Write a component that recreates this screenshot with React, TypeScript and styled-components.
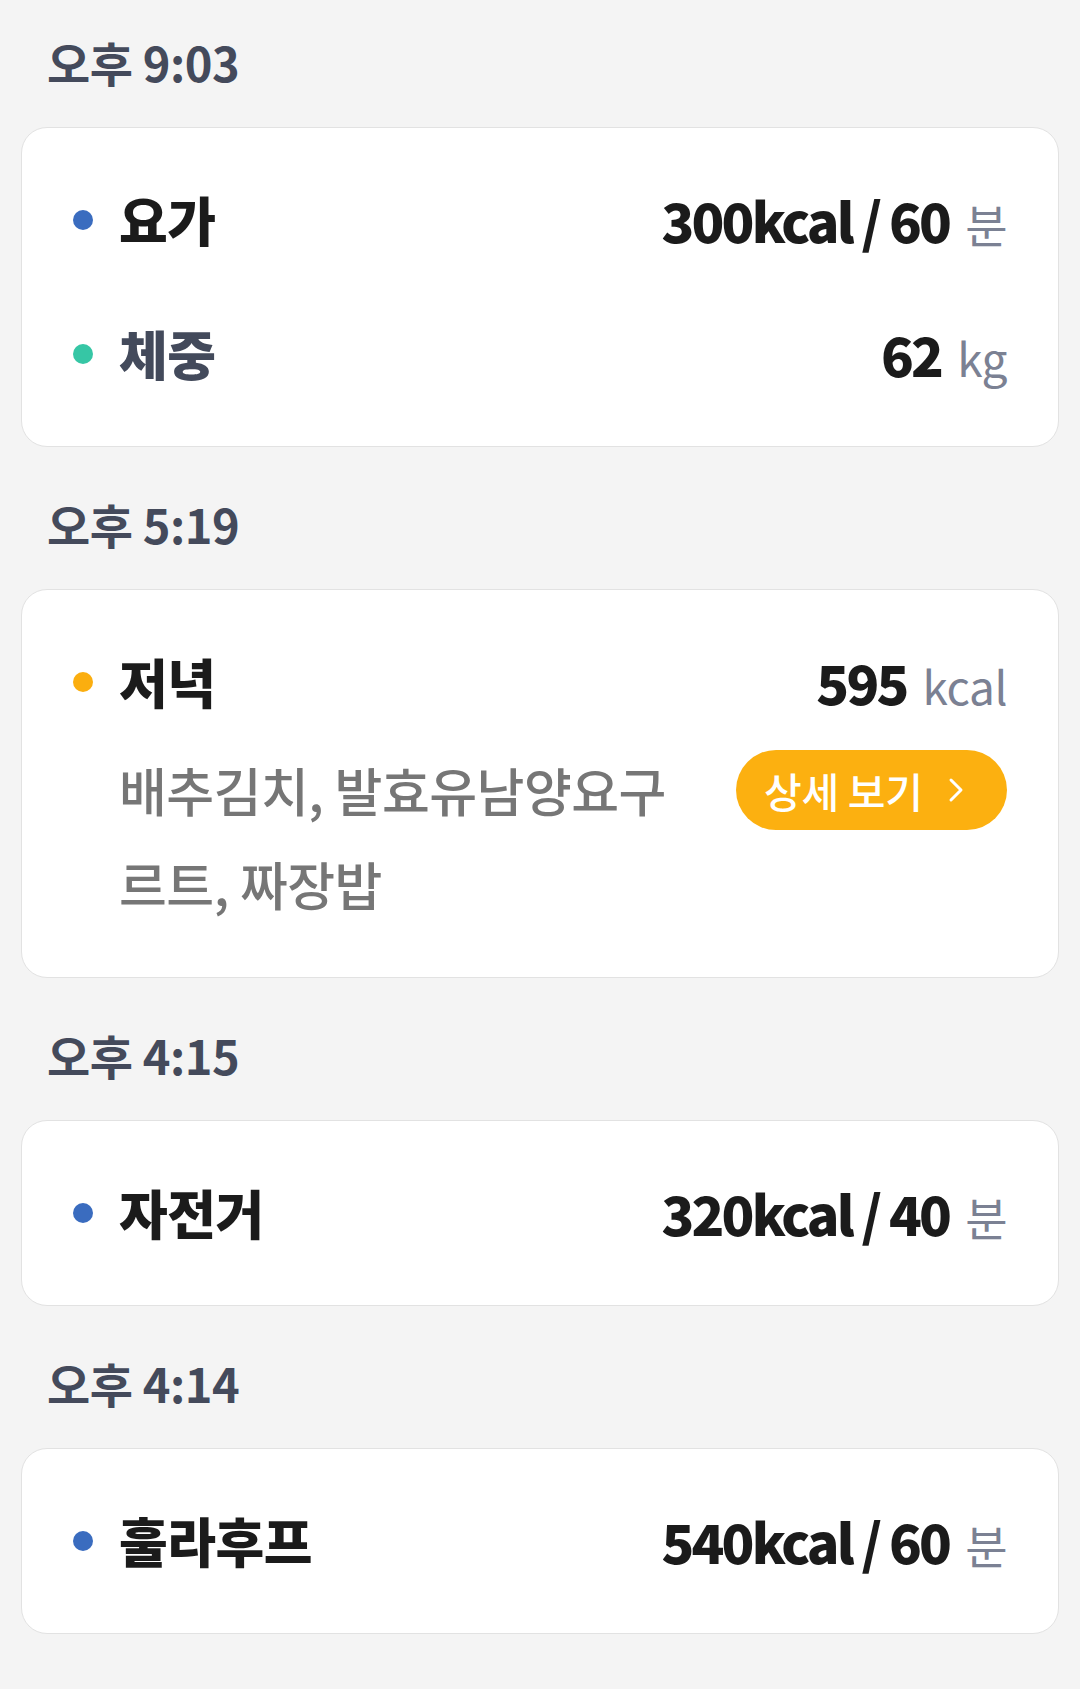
import React from "react";
import styled, { createGlobalStyle } from "styled-components";

const GlobalStyle = createGlobalStyle`
  html, body {
    margin: 0;
    padding: 0;
    background: #f4f4f4;
  }
  body {
    font-family: "Noto Sans CJK KR", "Noto Sans", sans-serif;
    -webkit-font-smoothing: antialiased;
  }
`;

const Page = styled.main`
  box-sizing: border-box;
  width: 1080px;
  min-height: 1689px;
  padding: 32px 21px 40px 21px;
  display: flex;
  flex-direction: column;
  gap: 47px;
  background: #f4f4f4;
`;

const Section = styled.section`
  display: flex;
  flex-direction: column;
  gap: 35px;
`;

const TimeLabel = styled.h2`
  margin: 0;
  padding-left: 26px;
  height: 60px;
  line-height: 60px;
  font-size: 47px;
  font-weight: 700;
  color: #444a5b;
  letter-spacing: -0.5px;
`;

const Card = styled.div<{ $detail?: boolean }>`
  box-sizing: border-box;
  background: #ffffff;
  border: 1.5px solid #e2e2e2;
  border-radius: 26px;
  padding: 49px 51px ${(p) => (p.$detail ? "46px" : "49px")} 51px;
  display: flex;
  flex-direction: column;
  gap: 48px;
`;

const Entry = styled.div`
  display: flex;
  flex-direction: column;
`;

const Row = styled.div`
  display: flex;
  align-items: center;
  height: 86px;
`;

const Dot = styled.span<{ $color: string }>`
  flex: none;
  width: 20px;
  height: 20px;
  border-radius: 50%;
  background: ${(p) => p.$color};
  margin-right: 26px;
`;

const Title = styled.span<{ $muted?: boolean }>`
  flex: 1;
  font-size: 53px;
  font-weight: 900;
  line-height: 1.2;
  color: ${(p) => (p.$muted ? "#434a5b" : "#1b1b1b")};
  letter-spacing: -0.5px;
`;

const Value = styled.span`
  flex: none;
  line-height: 1.2;
  white-space: nowrap;
`;

const Amount = styled.span`
  font-size: 54px;
  font-weight: 900;
  color: #1b1b1b;
  letter-spacing: -2.8px;
`;

const Unit = styled.span`
  font-size: 46px;
  font-weight: 400;
  color: #7b8193;
  margin-left: 16px;
  letter-spacing: -0.5px;
`;

const DetailRow = styled.div`
  display: flex;
  align-items: flex-start;
  gap: 40px;
  margin-top: 18px;
  padding-left: 46px;
`;

const Foods = styled.p`
  flex: 1;
  margin: 0;
  font-size: 52px;
  font-weight: 500;
  line-height: 94px;
  color: #767676;
  letter-spacing: -0.5px;
`;

const DetailButton = styled.button`
  flex: none;
  margin-top: 7px;
  width: 271px;
  height: 80px;
  border: none;
  border-radius: 40px;
  background: #fcb010;
  color: #ffffff;
  font-family: inherit;
  font-size: 41px;
  font-weight: 500;
  display: flex;
  align-items: center;
  justify-content: flex-start;
  padding: 0 0 0 28px;
  gap: 24px;
  cursor: pointer;
  letter-spacing: -0.3px;
`;

const Chevron = () => (
  <svg width="18" height="28" viewBox="0 0 18 28" fill="none">
    <polyline
      points="4,4 14,14 4,24"
      stroke="#ffffff"
      strokeWidth="3"
      strokeLinecap="round"
      strokeLinejoin="round"
    />
  </svg>
);

type Item = {
  dot: string;
  title: string;
  muted?: boolean;
  amount: string;
  unit: string;
  foods?: string;
};

type Group = { time: string; items: Item[] };

const BLUE = "#3a6cbf";
const TEAL = "#36c6a5";
const AMBER = "#fbae0f";

const groups: Group[] = [
  {
    time: "오후 9:03",
    items: [
      { dot: BLUE, title: "요가", amount: "300kcal / 60", unit: "분" },
      { dot: TEAL, title: "체중", muted: true, amount: "62", unit: "kg" },
    ],
  },
  {
    time: "오후 5:19",
    items: [
      {
        dot: AMBER,
        title: "저녁",
        amount: "595",
        unit: "kcal",
        foods: "배추김치, 발효유남양요구르트, 짜장밥",
      },
    ],
  },
  {
    time: "오후 4:15",
    items: [{ dot: BLUE, title: "자전거", amount: "320kcal / 40", unit: "분" }],
  },
  {
    time: "오후 4:14",
    items: [{ dot: BLUE, title: "훌라후프", amount: "540kcal / 60", unit: "분" }],
  },
];

export default function App() {
  return (
    <>
      <GlobalStyle />
      <Page>
        {groups.map((g) => (
          <Section key={g.time}>
            <TimeLabel>{g.time}</TimeLabel>
            <Card $detail={g.items.some((it) => !!it.foods)}>
              {g.items.map((it) => (
                <Entry key={it.title}>
                  <Row>
                    <Dot $color={it.dot} />
                    <Title $muted={it.muted}>{it.title}</Title>
                    <Value>
                      <Amount>{it.amount}</Amount>
                      <Unit>{it.unit}</Unit>
                    </Value>
                  </Row>
                  {it.foods && (
                    <DetailRow>
                      <Foods>{it.foods}</Foods>
                      <DetailButton type="button">
                        상세 보기
                        <Chevron />
                      </DetailButton>
                    </DetailRow>
                  )}
                </Entry>
              ))}
            </Card>
          </Section>
        ))}
      </Page>
    </>
  );
}
